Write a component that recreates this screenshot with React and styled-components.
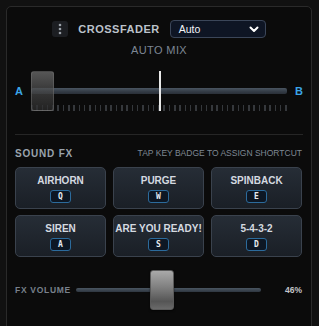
import React from "react";
import styled, { createGlobalStyle } from "styled-components";

const Global = createGlobalStyle`
  html, body { margin: 0; padding: 0; background: #111111; }
  body { font-family: "Liberation Sans", Arial, sans-serif; }
`;

const Panel = styled.div`
  margin: 6px 7px 0 6px;
  height: 340px;
  box-sizing: border-box;
  background: #0b0b0b;
  border: 1px solid #2a2a2a;
  border-radius: 5px;
  padding: 13px 8px 0 8px;
  display: flex;
  flex-direction: column;
`;

const Header = styled.div`
  display: flex;
  align-items: center;
  justify-content: center;
  gap: 10px;
  height: 18px;
`;

const MenuBtn = styled.div`
  width: 16px;
  height: 16px;
  border-radius: 3px;
  background: #1c1e22;
  display: flex;
  align-items: center;
  justify-content: center;
`;

const Title = styled.div`
  font-weight: 700;
  font-size: 11px;
  letter-spacing: 0.5px;
  color: #bcc2ca;
`;

const Select = styled.div`
  width: 96px;
  height: 18px;
  box-sizing: border-box;
  border: 1px solid #3b4659;
  border-radius: 4px;
  background: #0e1524;
  display: flex;
  align-items: center;
  justify-content: space-between;
  padding: 0 6px 0 8px;
  color: #f2f4f7;
  font-size: 10.5px;
`;

const Sub = styled.div`
  text-align: center;
  margin-top: 6px;
  font-size: 11px;
  letter-spacing: 0.4px;
  color: #7d8794;
`;

const FaderRow = styled.div`
  display: flex;
  align-items: flex-start;
  margin-top: 15px;
`;

const EndLabel = styled.div`
  width: 12px;
  flex: none;
  font-weight: 700;
  font-size: 11px;
  color: #3ba5e8;
  text-align: ${(p) => p.$align};
  padding-top: 14px;
`;

const FaderArea = styled.div`
  position: relative;
  flex: 1;
  height: 40px;
  margin: 0 4px;
`;

const Rail = styled.div`
  position: absolute;
  left: 0;
  right: 0;
  top: 17px;
  height: 6px;
  border-radius: 2px;
  background: linear-gradient(#4a5561, #333b45 60%, #2a3038);
`;

const Ticks = styled.div`
  position: absolute;
  left: 0;
  right: 0;
  bottom: 0;
  height: 6px;
  display: flex;
  justify-content: space-between;
`;

const Tick = styled.div`
  width: 1.5px;
  height: 6px;
  background: #35383c;
`;

const CenterLine = styled.div`
  position: absolute;
  left: 50%;
  top: 0;
  bottom: 0;
  width: 1.5px;
  background: #e8e8e8;
`;

const XKnob = styled.div`
  position: absolute;
  left: 0;
  top: 0;
  width: 23px;
  height: 40px;
  box-sizing: border-box;
  border-radius: 3px;
  border: 1px solid rgba(120,120,120,0.45);
  background: linear-gradient(rgba(105,105,105,0.8), rgba(70,70,70,0.7) 55%, rgba(45,45,45,0.7));
`;

const Divider = styled.div`
  height: 1px;
  background: #262626;
  margin-top: 23px;
`;

const SectionHead = styled.div`
  display: flex;
  justify-content: space-between;
  align-items: center;
  margin-top: 12px;
  height: 12px;
`;

const SectionTitle = styled.div`
  font-weight: 700;
  font-size: 10px;
  letter-spacing: 0.8px;
  color: #9aa3ad;
`;

const Hint = styled.div`
  font-size: 8.5px;
  color: #7f8893;
  margin-right: 1px;
`;

const Grid = styled.div`
  display: grid;
  grid-template-columns: repeat(3, 1fr);
  column-gap: 7px;
  row-gap: 6px;
  margin-top: 8px;
  padding-right: 1px;
`;

const FxButton = styled.div`
  height: 42px;
  box-sizing: border-box;
  border: 1px solid #3a424d;
  border-radius: 5px;
  background: linear-gradient(#262d36, #1a1f26);
  display: flex;
  flex-direction: column;
  align-items: center;
  padding-top: 7px;
  gap: 4px;
  overflow: hidden;
`;

const FxLabel = styled.div`
  font-weight: 700;
  font-size: 10px;
  color: #d5dae0;
  white-space: nowrap;
`;

const KeyBadge = styled.div`
  width: 21px;
  height: 13px;
  box-sizing: border-box;
  border: 1px solid #2c6b9c;
  border-radius: 3px;
  background: #0d1724;
  color: #e6ebf0;
  font-family: "DejaVu Sans Mono", monospace;
  font-weight: 700;
  font-size: 8px;
  display: flex;
  align-items: center;
  justify-content: center;
`;

const VolRow = styled.div`
  display: flex;
  align-items: center;
  margin-top: 13px;
  height: 40px;
`;

const VolLabel = styled.div`
  width: 61px;
  flex: none;
  font-weight: 700;
  font-size: 8.5px;
  letter-spacing: 0.7px;
  color: #78818b;
`;

const VolArea = styled.div`
  position: relative;
  width: 185px;
  height: 40px;
  flex: none;
`;

const VolRail = styled.div`
  position: absolute;
  left: 0;
  right: 0;
  top: 18px;
  height: 4px;
  border-radius: 2px;
  background: linear-gradient(#4a5662, #2e3640);
`;

const VolKnob = styled.div`
  position: absolute;
  top: 0;
  width: 24px;
  height: 40px;
  box-sizing: border-box;
  border-radius: 3px;
  border: 1px solid #5a5a5a;
  background: linear-gradient(#a9a9a9, #7d7d7d 45%, #555 80%, #6a6a6a);
  box-shadow: 0 1px 2px rgba(0,0,0,0.6);
`;

const VolValue = styled.div`
  flex: 1;
  text-align: right;
  font-weight: 700;
  font-size: 8.5px;
  color: #c4c6c9;
  padding-right: 1px;
`;

const fx = [
  ["AIRHORN", "Q"],
  ["PURGE", "W"],
  ["SPINBACK", "E"],
  ["SIREN", "A"],
  ["ARE YOU READY!", "S"],
  ["5-4-3-2", "D"],
];

export default function App() {
  const vol = 46;
  return (
    <>
      <Global />
      <Panel>
        <Header>
          <MenuBtn>
            <svg width="4" height="12" viewBox="0 0 4 12">
              <circle cx="2" cy="2" r="1.3" fill="#9aa0a8" />
              <circle cx="2" cy="6" r="1.3" fill="#9aa0a8" />
              <circle cx="2" cy="10" r="1.3" fill="#9aa0a8" />
            </svg>
          </MenuBtn>
          <Title>CROSSFADER</Title>
          <Select>
            <span>Auto</span>
            <svg width="10" height="7" viewBox="0 0 10 7">
              <path d="M1.5 1.5 L5 5 L8.5 1.5" stroke="#ffffff" strokeWidth="2" fill="none" strokeLinecap="round" strokeLinejoin="round" />
            </svg>
          </Select>
        </Header>
        <Sub>AUTO MIX</Sub>
        <FaderRow>
          <EndLabel $align="left">A</EndLabel>
          <FaderArea>
            <Rail />
            <Ticks>
              {Array.from({ length: 49 }).map((_, i) => (
                <Tick key={i} />
              ))}
            </Ticks>
            <CenterLine />
            <XKnob />
          </FaderArea>
          <EndLabel $align="right">B</EndLabel>
        </FaderRow>
        <Divider />
        <SectionHead>
          <SectionTitle>SOUND FX</SectionTitle>
          <Hint>TAP KEY BADGE TO ASSIGN SHORTCUT</Hint>
        </SectionHead>
        <Grid>
          {fx.map(([label, key]) => (
            <FxButton key={label}>
              <FxLabel>{label}</FxLabel>
              <KeyBadge>{key}</KeyBadge>
            </FxButton>
          ))}
        </Grid>
        <VolRow>
          <VolLabel>FX VOLUME</VolLabel>
          <VolArea>
            <VolRail />
            <VolKnob style={{ left: `calc(${vol}% - 11px)` }} />
          </VolArea>
          <VolValue>{vol}%</VolValue>
        </VolRow>
      </Panel>
    </>
  );
}
